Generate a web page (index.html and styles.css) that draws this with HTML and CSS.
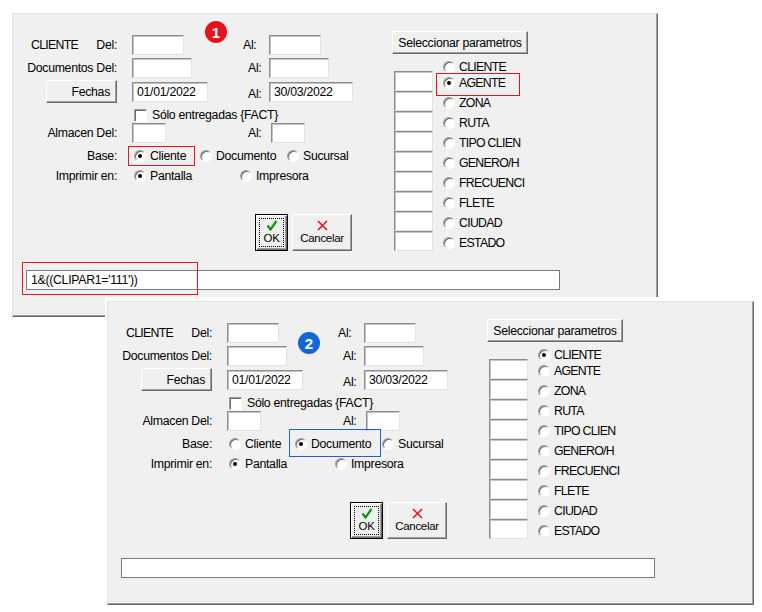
FILE: index.html
```html
<!DOCTYPE html>
<html lang="es">
<head>
    <meta charset="UTF-8">
    <meta name="viewport" content="width=device-width, initial-scale=1.0">
    <title>Parametros del reporte</title>
    <link rel="stylesheet" href="styles.css">
</head>
<body>
    <!-- Ventana 1: base por cliente, parametro AGENTE -->
    <div class="win win1">
        <span class="badge badge-red">1</span>
        <div class="body">
            <div class="left">
                <div class="row">
                    <div class="lbl split"><span class="caps">CLIENTE</span><span>Del:</span></div>
                    <div class="cell"><input class="edit w52" type="text"></div>
                    <div class="al first">Al:</div>
                    <input class="edit w52" type="text">
                </div>
                <div class="row r2">
                    <div class="lbl">Documentos Del:</div>
                    <div class="cell"><input class="edit w60" type="text"></div>
                    <div class="al">Al:</div>
                    <input class="edit w60" type="text">
                </div>
                <div class="row r3">
                    <div class="lbl"><button class="btn btn-fechas">Fechas</button></div>
                    <div class="cell"><input class="edit w76" type="text" value="01/01/2022"></div>
                    <div class="al low">Al:</div>
                    <input class="edit w84" type="text" value="30/03/2022">
                </div>
                <div class="row r4">
                    <div class="lbl"></div>
                    <div class="opts"><span class="check"></span><span>Sólo entregadas {FACT}</span></div>
                </div>
                <div class="row">
                    <div class="lbl">Almacen Del:</div>
                    <div class="cell"><input class="edit w34" type="text"></div>
                    <div class="al">Al:</div>
                    <input class="edit w34 ml2" type="text">
                </div>
                <div class="row r6">
                    <div class="lbl">Base:</div>
                    <div class="opts">
                        <span class="opt w66 mark mark-base"><span class="radio on"></span>Cliente</span>
                        <span class="opt w87"><span class="radio"></span>Documento</span>
                        <span class="opt"><span class="radio"></span>Sucursal</span>
                    </div>
                </div>
                <div class="row">
                    <div class="lbl">Imprimir en:</div>
                    <div class="opts">
                        <span class="opt w106"><span class="radio on"></span>Pantalla</span>
                        <span class="opt"><span class="radio"></span>Impresora</span>
                    </div>
                </div>
                <div class="row actions">
                    <button class="btn btn-ok">
                        <span class="focus"></span>
                        <svg width="12" height="11" viewBox="0 0 12 11"><path d="M1.5 5.5 L4.5 9.5 L10.5 1" fill="none" stroke="#119411" stroke-width="2.2"/></svg>
                        <span>OK</span>
                    </button>
                    <button class="btn btn-cancel">
                        <svg width="11" height="11" viewBox="0 0 11 11"><path d="M1 1 L10 10 M10 1 L1 10" fill="none" stroke="#e3161c" stroke-width="1.6"/></svg>
                        <span>Cancelar</span>
                    </button>
                </div>
            </div>

            <div class="right">
                <button class="btn btn-sel">Seleccionar parametros</button>
                <div class="params">
                    <div class="boxes">
                        <input class="edit box" type="text">
                        <input class="edit box" type="text">
                        <input class="edit box" type="text">
                        <input class="edit box" type="text">
                        <input class="edit box" type="text">
                        <input class="edit box" type="text">
                        <input class="edit box" type="text">
                        <input class="edit box" type="text">
                        <input class="edit box" type="text">
                    </div>
                    <div class="opt-list">
                        <span class="opt p-first"><span class="radio"></span><span class="plabel">CLIENTE</span></span>
                        <span class="opt p-second mark mark-agente"><span class="radio on"></span><span class="plabel">AGENTE</span></span>
                        <span class="opt"><span class="radio"></span><span class="plabel">ZONA</span></span>
                        <span class="opt"><span class="radio"></span><span class="plabel">RUTA</span></span>
                        <span class="opt"><span class="radio"></span><span class="plabel">TIPO CLIEN</span></span>
                        <span class="opt"><span class="radio"></span><span class="plabel">GENERO/H</span></span>
                        <span class="opt"><span class="radio"></span><span class="plabel">FRECUENCI</span></span>
                        <span class="opt"><span class="radio"></span><span class="plabel">FLETE</span></span>
                        <span class="opt"><span class="radio"></span><span class="plabel">CIUDAD</span></span>
                        <span class="opt"><span class="radio"></span><span class="plabel">ESTADO</span></span>
                    </div>
                </div>
            </div>
        </div>
        <div class="status mark mark-status"><input class="filter" type="text" value="1&amp;((CLIPAR1='111'))"></div>
    </div>

    <!-- Ventana 2: base por documento, parametro CLIENTE -->
    <div class="win win2">
        <span class="badge badge-blue">2</span>
        <div class="body">
            <div class="left">
                <div class="row">
                    <div class="lbl split"><span class="caps">CLIENTE</span><span>Del:</span></div>
                    <div class="cell"><input class="edit w52" type="text"></div>
                    <div class="al first">Al:</div>
                    <input class="edit w52" type="text">
                </div>
                <div class="row r2">
                    <div class="lbl">Documentos Del:</div>
                    <div class="cell"><input class="edit w60" type="text"></div>
                    <div class="al">Al:</div>
                    <input class="edit w60" type="text">
                </div>
                <div class="row r3">
                    <div class="lbl"><button class="btn btn-fechas">Fechas</button></div>
                    <div class="cell"><input class="edit w76" type="text" value="01/01/2022"></div>
                    <div class="al low">Al:</div>
                    <input class="edit w84" type="text" value="30/03/2022">
                </div>
                <div class="row r4">
                    <div class="lbl"></div>
                    <div class="opts"><span class="check"></span><span>Sólo entregadas {FACT}</span></div>
                </div>
                <div class="row">
                    <div class="lbl">Almacen Del:</div>
                    <div class="cell"><input class="edit w34" type="text"></div>
                    <div class="al">Al:</div>
                    <input class="edit w34 ml2" type="text">
                </div>
                <div class="row r6">
                    <div class="lbl">Base:</div>
                    <div class="opts">
                        <span class="opt w66"><span class="radio"></span>Cliente</span>
                        <span class="opt w87 mark mark-doc"><span class="radio on"></span>Documento</span>
                        <span class="opt"><span class="radio"></span>Sucursal</span>
                    </div>
                </div>
                <div class="row">
                    <div class="lbl">Imprimir en:</div>
                    <div class="opts">
                        <span class="opt w106"><span class="radio on"></span>Pantalla</span>
                        <span class="opt"><span class="radio"></span>Impresora</span>
                    </div>
                </div>
                <div class="row actions">
                    <button class="btn btn-ok">
                        <span class="focus"></span>
                        <svg width="12" height="11" viewBox="0 0 12 11"><path d="M1.5 5.5 L4.5 9.5 L10.5 1" fill="none" stroke="#119411" stroke-width="2.2"/></svg>
                        <span>OK</span>
                    </button>
                    <button class="btn btn-cancel">
                        <svg width="11" height="11" viewBox="0 0 11 11"><path d="M1 1 L10 10 M10 1 L1 10" fill="none" stroke="#e3161c" stroke-width="1.6"/></svg>
                        <span>Cancelar</span>
                    </button>
                </div>
            </div>

            <div class="right">
                <button class="btn btn-sel">Seleccionar parametros</button>
                <div class="params">
                    <div class="boxes">
                        <input class="edit box" type="text">
                        <input class="edit box" type="text">
                        <input class="edit box" type="text">
                        <input class="edit box" type="text">
                        <input class="edit box" type="text">
                        <input class="edit box" type="text">
                        <input class="edit box" type="text">
                        <input class="edit box" type="text">
                        <input class="edit box" type="text">
                    </div>
                    <div class="opt-list">
                        <span class="opt p-first"><span class="radio on"></span><span class="plabel">CLIENTE</span></span>
                        <span class="opt p-second"><span class="radio"></span><span class="plabel">AGENTE</span></span>
                        <span class="opt"><span class="radio"></span><span class="plabel">ZONA</span></span>
                        <span class="opt"><span class="radio"></span><span class="plabel">RUTA</span></span>
                        <span class="opt"><span class="radio"></span><span class="plabel">TIPO CLIEN</span></span>
                        <span class="opt"><span class="radio"></span><span class="plabel">GENERO/H</span></span>
                        <span class="opt"><span class="radio"></span><span class="plabel">FRECUENCI</span></span>
                        <span class="opt"><span class="radio"></span><span class="plabel">FLETE</span></span>
                        <span class="opt"><span class="radio"></span><span class="plabel">CIUDAD</span></span>
                        <span class="opt"><span class="radio"></span><span class="plabel">ESTADO</span></span>
                    </div>
                </div>
            </div>
        </div>
        <div class="status"><input class="filter" type="text" value=""></div>
    </div>
</body>
</html>
```

FILE: styles.css
```css
* {
    box-sizing: border-box;
}

body {
    margin: 0;
    width: 762px;
    height: 612px;
    position: relative;
    overflow: hidden;
    background: #fff;
    color: #000;
    font-family: "Liberation Sans", Arial, sans-serif;
    font-size: 12.3px;
    letter-spacing: -0.3px;
}

/* ventanas */
.win {
    position: absolute;
    width: 646px;
    height: 304px;
    background: #f0f0f0;
    border: 1px solid;
    border-color: #e3e3e3 #696969 #696969 #e3e3e3;
    box-shadow: inset -1px -1px 0 #a0a0a0;
}

.win1 {
    left: 12px;
    top: 13px;
}

.win2 {
    left: 107px;
    top: 301px;
    width: 647px;
    box-shadow: inset -1px -1px 0 #a0a0a0, 0 -4px 0 #fff, -2px 0 0 #fff, -2px -4px 0 #fff;
}

.badge {
    position: absolute;
    width: 22px;
    height: 22px;
    border-radius: 50%;
    display: flex;
    align-items: center;
    justify-content: center;
    color: #fff;
    font-weight: bold;
    font-size: 15px;
    letter-spacing: 0;
}

.badge-red {
    left: 192px;
    top: 7px;
    background: #e5121b;
}

.badge-blue {
    left: 190px;
    top: 30px;
    background: #1565d8;
}

.body {
    display: flex;
}

.left {
    width: 379px;
    flex: none;
    padding-top: 21px;
}

.row {
    display: flex;
    align-items: center;
    height: 20px;
}

.r2 { margin-top: 3px; }
.r3 { margin-top: 2px; height: 23px; }
.r4 { margin-top: 4px; height: 16px; }
.r6 { margin-top: 3px; }

.lbl {
    width: 104px;
    flex: none;
    display: flex;
    justify-content: flex-end;
    align-items: center;
}

.lbl.split {
    justify-content: space-between;
    padding-left: 18px;
}

.caps {
    letter-spacing: -0.7px;
}

.cell {
    width: 111px;
    margin-left: 15px;
    flex: none;
}

.al {
    width: 26px;
    flex: none;
    padding-left: 5px;
}

.al.first { padding-left: 0; }
.al.low { padding-top: 5px; }

.opts {
    display: flex;
    align-items: center;
    margin-left: 15px;
    padding-left: 2px;
}

.opt {
    display: flex;
    align-items: center;
    gap: 4px;
    height: 20px;
    position: relative;
    flex: none;
}

.w66 { width: 66px; }
.w87 { width: 87px; }
.w106 { width: 106px; }

/* controles */
.edit {
    height: 20px;
    padding: 0 0 0 4px;
    border: 1px solid;
    border-color: #8c8c8c #e3e3e3 #e3e3e3 #8c8c8c;
    box-shadow: inset 1px 1px 0 #c4c4c4;
    background: #fff;
    color: #000;
    font: inherit;
    letter-spacing: inherit;
    outline: none;
    display: block;
}

.w34 { width: 34px; }
.w52 { width: 52px; }
.w60 { width: 60px; }
.w76 { width: 76px; }
.w84 { width: 84px; }
.ml2 { margin-left: 2px; }

.radio {
    width: 12px;
    height: 12px;
    flex: none;
    position: relative;
    border-radius: 50%;
    background: #fff;
    border: 1px solid;
    border-color: #a0a0a0 #fff #fff #a0a0a0;
    box-shadow: inset 1px 1px 0 #696969;
}

.radio.on::after {
    content: '';
    position: absolute;
    left: 3px;
    top: 3px;
    width: 4px;
    height: 4px;
    border-radius: 50%;
    background: #000;
}

.check {
    width: 13px;
    height: 13px;
    margin-right: 5px;
    background: #fff;
    border: 1px solid;
    border-color: #a0a0a0 #fff #fff #a0a0a0;
    box-shadow: inset 1px 1px 0 #696969;
}

.btn {
    background: #f0f0f0;
    border: 1px solid;
    border-color: #fff #696969 #696969 #fff;
    box-shadow: inset -1px -1px 0 #a0a0a0;
    color: #000;
    font: inherit;
    letter-spacing: inherit;
    padding: 0;
    position: relative;
}

.btn-fechas {
    width: 71px;
    height: 23px;
    text-align: right;
    padding-right: 6px;
}

.btn-sel {
    width: 136px;
    height: 23px;
}

.actions {
    margin-top: 28px;
    height: 37px;
    padding-left: 242px;
    gap: 4px;
    align-items: stretch;
}

.btn-ok, .btn-cancel {
    display: flex;
    flex-direction: column;
    align-items: center;
    padding-top: 5px;
    gap: 1px;
    font-size: 11.5px;
    letter-spacing: -0.3px;
}

.btn-ok {
    width: 33px;
    border-color: #000;
    box-shadow: inset 1px 1px 0 #fff, inset -1px -1px 0 #696969, inset -2px -2px 0 #a0a0a0;
}

.btn-ok .focus {
    position: absolute;
    left: 3px;
    top: 3px;
    right: 3px;
    bottom: 3px;
    border: 1px dotted #000;
}

.btn-cancel {
    width: 60px;
}

/* columna de parametros */
.right {
    padding-top: 17px;
}

.params {
    display: flex;
}

.boxes {
    margin-top: 17px;
    margin-left: 2px;
    width: 39px;
}

.box {
    width: 39px;
    height: 20px;
}

.opt-list {
    margin-left: 10px;
    margin-top: 5px;
    display: flex;
    flex-direction: column;
}

.opt-list .p-first,
.opt-list .p-second {
    height: 16px;
}

.opt-list .p-second {
    margin-bottom: 2px;
}

.plabel {
    width: 60px;
    white-space: nowrap;
    letter-spacing: -0.7px;
}

.status {
    position: relative;
    margin: 17px 0 0 13px;
    width: 534px;
    height: 20px;
}

.filter {
    width: 100%;
    height: 20px;
    padding: 0 0 0 4px;
    border: 1px solid #7a7a7a;
    background: #fff;
    font: inherit;
    letter-spacing: inherit;
    color: #000;
    outline: none;
}

/* marcas de la captura */
.mark::after {
    content: '';
    position: absolute;
    border: 1px solid #e8141b;
    pointer-events: none;
}

.mark-base::after {
    left: -6px;
    top: 0;
    width: 65px;
    height: 18px;
}

.mark-agente::after {
    left: -7px;
    top: -2px;
    width: 82px;
    height: 21px;
}

.mark-doc::after {
    left: -6px;
    top: -5px;
    width: 90px;
    height: 26px;
    border-color: #1f5fd6;
}

.mark-status::after {
    left: -4px;
    top: -8px;
    width: 174px;
    height: 31px;
}
```
